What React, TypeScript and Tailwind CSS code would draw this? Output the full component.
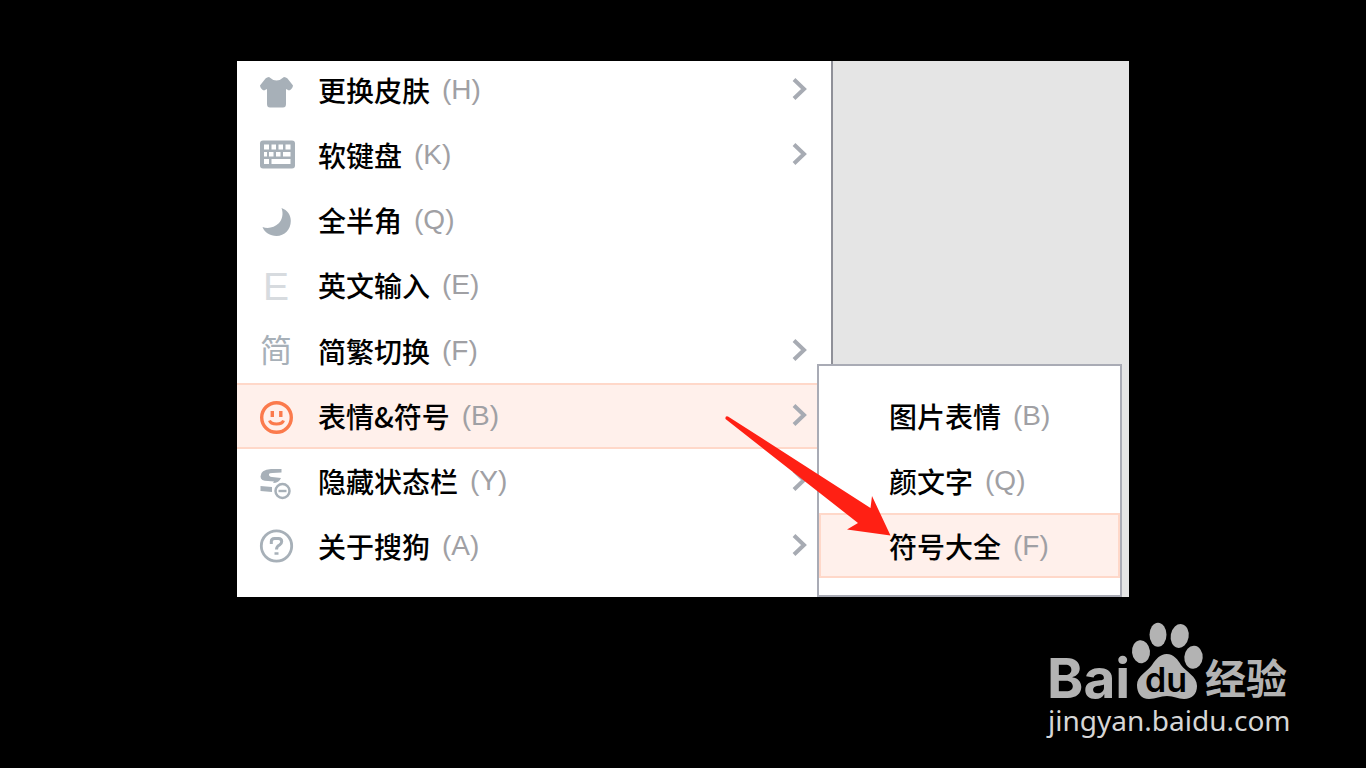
import type { ReactNode } from "react";

type Entry = {
  label: string;
  hotkey: string;
  icon?: ReactNode;
  submenu?: boolean;
  active?: boolean;
};

function ShirtIcon() {
  return (
    <svg className="h-10 w-10 fill-[#a7b0b8]" viewBox="0 0 40 40" aria-hidden="true">
      <path d="M13 7 Q20.500 14 28 7 Q30 7 31.500 8.500 L37 15.500 Q36.500 19 33 20.500 L30 19 L30 34 Q30 37.500 27 37.500 L14 37.500 Q11 37.500 11 34 L11 19 L8 20.500 Q4.500 19 4 15.500 L9.500 8.500 Q11 7 13 7 Z" />
    </svg>
  );
}

function KeyboardIcon() {
  return (
    <svg className="h-10 w-10" viewBox="0 0 40 40" aria-hidden="true">
      <rect x="4" y="5.500" width="35" height="28" rx="3" fill="#a7b0b8" />
      <g fill="#fff">
        <rect x="8" y="9.500" width="5" height="5" />
        <rect x="15.500" y="9.500" width="4.500" height="5" />
        <rect x="22.500" y="9.500" width="4.500" height="5" />
        <rect x="29.500" y="9.500" width="5" height="5" />
        <rect x="8" y="17" width="3" height="4.500" />
        <rect x="13" y="17" width="4.500" height="4.500" />
        <rect x="20" y="17" width="4.500" height="4.500" />
        <rect x="27" y="17" width="7.500" height="4.500" />
        <rect x="8" y="24" width="5" height="5" />
        <rect x="15.500" y="24" width="19" height="5" />
      </g>
    </svg>
  );
}

function MoonIcon() {
  return (
    <svg className="h-10 w-10 fill-[#a7b0b8]" viewBox="0 0 40 40" aria-hidden="true">
      <path d="M25.500 8 C31.500 10 34.800 15 34.800 21 C34.800 29.500 28.500 36 20.500 36 C14 36 8.500 32.500 6.500 27 C12 29 18.500 27.500 22.500 23.500 C26.500 19.500 27.500 13.500 25.500 8 Z" />
    </svg>
  );
}

function SmileIcon() {
  return (
    <svg className="h-10 w-10" viewBox="0 0 40 40" fill="none" stroke="#fb7a4c" aria-hidden="true">
      <circle cx="20.500" cy="21.500" r="14.800" strokeWidth="3.400" />
      <path d="M16.300 15 v6 M24.800 15 v6" strokeWidth="3.400" />
      <path d="M13.500 24.500 Q14.500 28 20.500 28 Q26.500 28 27.500 24.500" strokeWidth="3" />
    </svg>
  );
}

function HideBarIcon() {
  return (
    <svg className="h-10 w-10" viewBox="0 0 40 40" aria-hidden="true">
      <path
        d="M25.500 8 L15 8 Q4.500 8.500 4.500 15.500 Q4.500 20 12 20 L18 20.500 L17 22 Q23 22 25 17 L16 16 Q12.500 15.500 13 13 Q13.500 11.500 25.500 11.500 Z M4.500 25 L16 26 L16 31 L4.500 30 Z"
        fill="#a7b0b8"
      />
      <circle cx="26.500" cy="30" r="7" fill="none" stroke="#a7b0b8" strokeWidth="2.500" />
      <path d="M22.500 30 h8" stroke="#a7b0b8" strokeWidth="2.400" />
    </svg>
  );
}

function HelpIcon() {
  return (
    <svg className="h-10 w-10" viewBox="0 0 40 40" fill="none" stroke="#a7b0b8" aria-hidden="true">
      <circle cx="20.500" cy="20" r="15.200" strokeWidth="2.800" />
      <path d="M15.300 18 V15.500 Q15.300 12.500 18.500 12.500 H22.500 Q25.700 12.500 25.700 15.500 Q25.700 17.500 23.500 19 Q20.500 20.500 20.500 23.500" strokeWidth="3" />
      <path d="M18.500 27.500 h4" strokeWidth="2.500" />
    </svg>
  );
}

function Chevron() {
  return (
    <svg className="h-6 w-4 shrink-0" viewBox="0 0 16 24" fill="none" stroke="#a7abb3" strokeWidth="4" aria-hidden="true">
      <path d="M3 1.500 L13 11 L3 20.500" />
    </svg>
  );
}

const entries: Entry[] = [
  { label: "更换皮肤", hotkey: "H", icon: <ShirtIcon />, submenu: true },
  { label: "软键盘", hotkey: "K", icon: <KeyboardIcon />, submenu: true },
  { label: "全半角", hotkey: "Q", icon: <MoonIcon /> },
  {
    label: "英文输入",
    hotkey: "E",
    icon: <span className="pt-1 text-[39px] leading-10 text-[#d7dbdf]">E</span>,
  },
  {
    label: "简繁切换",
    hotkey: "F",
    icon: <span className="text-[32px] leading-10 text-[#a7b0b8]">简</span>,
    submenu: true,
  },
  { label: "表情&符号", hotkey: "B", icon: <SmileIcon />, submenu: true, active: true },
  { label: "隐藏状态栏", hotkey: "Y", icon: <HideBarIcon />, submenu: true },
  { label: "关于搜狗", hotkey: "A", icon: <HelpIcon />, submenu: true },
];

const symbols: Entry[] = [
  { label: "图片表情", hotkey: "B" },
  { label: "颜文字", hotkey: "Q" },
  { label: "符号大全", hotkey: "F", active: true },
];

function Caption({ entry }: { entry: Entry }) {
  return (
    <span className="flex grow items-center gap-3 text-[28px] leading-10 whitespace-nowrap text-black">
      <span className="font-['Noto_Sans_CJK_SC',sans-serif] font-medium">{entry.label}</span>
      <span className="text-[#a0a0a4]">({entry.hotkey})</span>
    </span>
  );
}

export default function App() {
  return (
    <div className="flex min-h-screen flex-col items-center bg-black px-4 pt-[61px] font-['Liberation_Sans','Noto_Sans_CJK_SC',sans-serif]">
      <main className="relative w-full max-w-[892px] overflow-hidden bg-[#e5e5e5]">
        <nav aria-label="输入法菜单" className="w-[596px] max-w-full border-r-2 border-[#8f9098] bg-white pb-[18px]">
          <ul className="-mt-1 grid h-[522px] grid-rows-8">
            {entries.map((entry) => (
              <li key={entry.hotkey}>
                <button
                  type="button"
                  className={
                    entry.active
                      ? "flex h-full w-full items-center border-y-2 border-[#ffd8c9] bg-[#fff0eb] pr-6 pl-[19px] text-left"
                      : "flex h-full w-full items-center border-y-2 border-transparent pr-6 pl-[19px] text-left"
                  }
                >
                  <span className="mr-[22px] flex w-10 shrink-0 justify-center">{entry.icon}</span>
                  <Caption entry={entry} />
                  {entry.submenu && <Chevron />}
                </button>
              </li>
            ))}
          </ul>
        </nav>

        <ul
          aria-label="表情&符号"
          className="absolute top-[303px] right-[7px] bottom-0 w-[305px] border-2 border-[#a9abb5] bg-white pt-[17px]"
        >
          {symbols.map((entry) => (
            <li key={entry.hotkey} className="h-[65px]">
              <button
                type="button"
                className={
                  entry.active
                    ? "flex h-full w-full items-center border-2 border-[#ffd8c9] bg-[#fff0eb] pl-[68px] text-left"
                    : "flex h-full w-full items-center border-2 border-transparent pl-[68px] text-left"
                }
              >
                <Caption entry={entry} />
              </button>
            </li>
          ))}
        </ul>

        <svg
          className="pointer-events-none absolute top-[353px] right-[236px] h-[124px] w-[170px]"
          viewBox="0 0 170 124"
          fill="#ff2014"
          aria-hidden="true"
        >
          <path d="M5 2.500 L147.500 94 L149 82 L167.500 121.500 L124 115.500 L135 109 L2.500 5 Q2 1.500 5 2.500 Z" />
        </svg>
      </main>

      <footer className="mt-[21px] mr-14 self-end">
        <a href="#top" className="block w-[250px]">
          <svg className="block h-[86px] w-[250px] overflow-visible fill-[#b3b3b3]" viewBox="0 0 250 86" role="img" aria-label="Baidu 经验">
            <text x="3" y="80" className="font-['Inter',sans-serif] text-[55px] font-bold">
              Bai
            </text>
            <ellipse cx="97" cy="33.700" rx="9" ry="11.500" transform="rotate(-6 97 33.700)" />
            <ellipse cx="114" cy="16.700" rx="8.500" ry="12" />
            <ellipse cx="135.700" cy="18" rx="9" ry="12" transform="rotate(10 135.700 18)" />
            <ellipse cx="149.500" cy="39.300" rx="9.200" ry="11.500" transform="rotate(4 149.500 39.300)" />
            <path d="M122.700 36 C130 36 134 42 137 47 C142 54 153 58 153 68 C153 76 148 81 140 81 C134 81 130 78 123 78 C116 78 112 81 105 81 C97 81 93 75 93 67 C93 58 103 54 108 47 C112 41 116 36 122.700 36 Z" />
            <text x="101" y="74" className="fill-black font-['Inter',sans-serif] text-[34px] font-semibold">
              du
            </text>
            <text x="161" y="76" className="font-['Noto_Sans_CJK_SC',sans-serif] text-[41px] font-bold">
              经验
            </text>
          </svg>
          <span className="block pl-1 font-['Noto_Sans',sans-serif] text-[28px] leading-8 whitespace-nowrap text-[#d6d6d6]">
            jingyan.baidu.com
          </span>
        </a>
      </footer>
    </div>
  );
}
